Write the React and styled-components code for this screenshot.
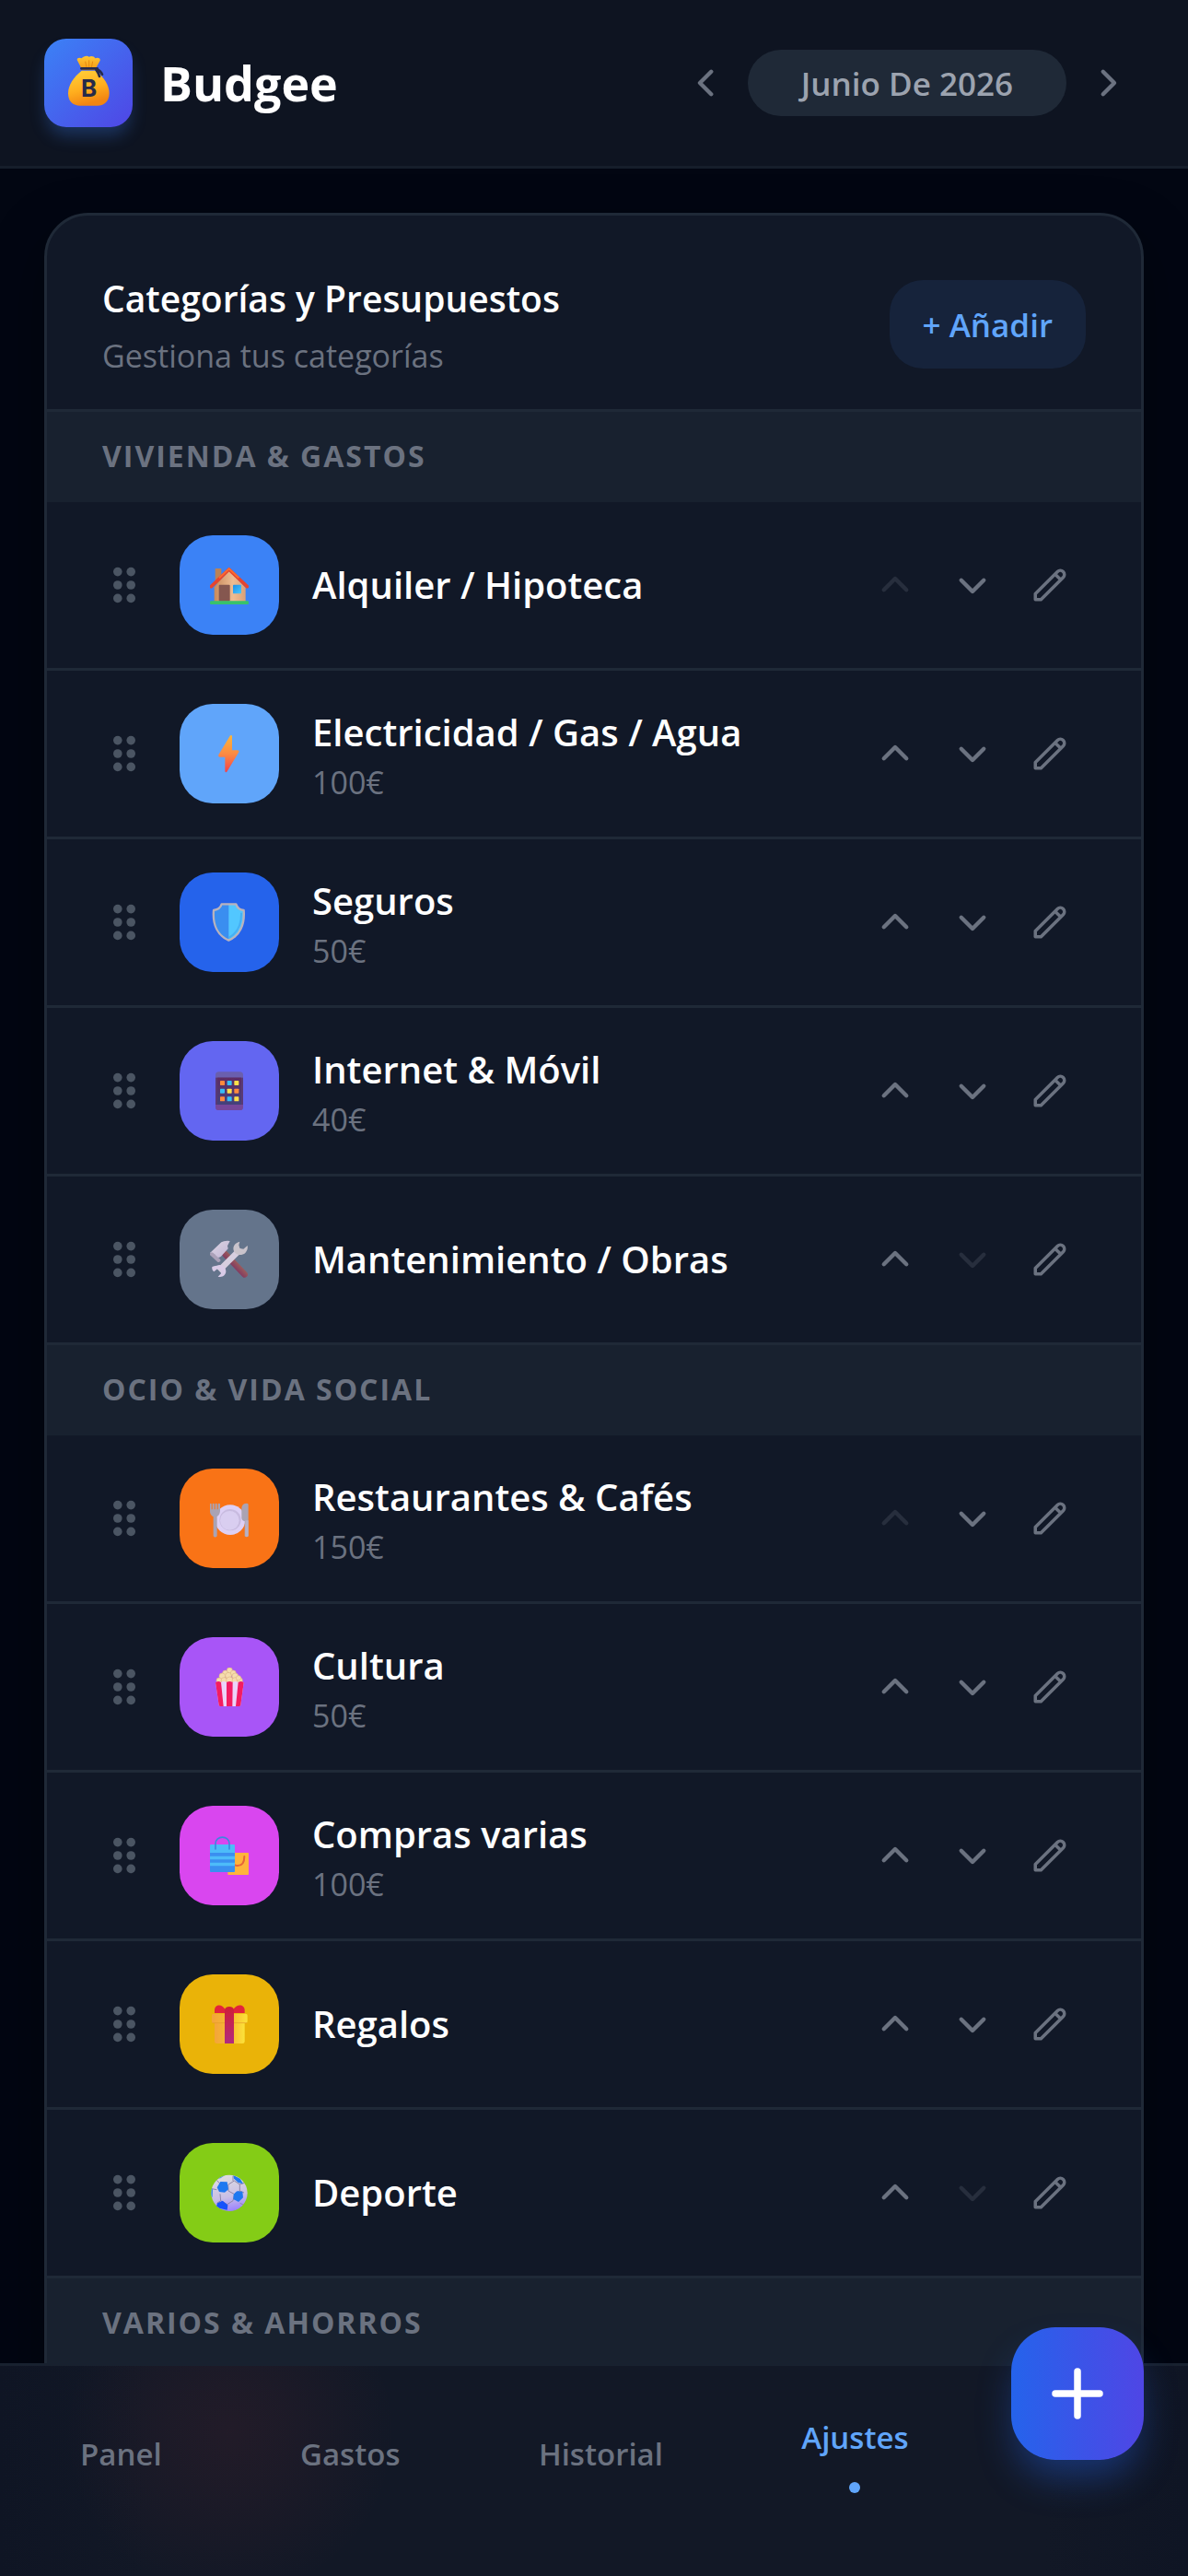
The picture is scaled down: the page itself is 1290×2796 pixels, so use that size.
import styled, { createGlobalStyle } from "styled-components";

const GlobalStyle = createGlobalStyle`
  * {
    box-sizing: border-box;
  }

  body {
    margin: 0;
    background: #020612;
    color: #ffffff;
    font-family: "Open Sans", "Noto Sans", sans-serif;
  }

  button {
    border: 0;
    padding: 0;
    background: none;
    color: inherit;
    font: inherit;
    cursor: pointer;
  }

  h1, h2, h3, p, ul {
    margin: 0;
    padding: 0;
  }

  svg {
    display: block;
  }
`;

const Shell = styled.div`
  display: flex;
  flex-direction: column;
  height: 100vh;
`;

const Header = styled.header`
  display: flex;
  align-items: center;
  justify-content: space-between;
  padding: 42px 48px;
  background: #0e1421;
  border-bottom: 3px solid #161e2b;
`;

const Brand = styled.div`
  display: flex;
  align-items: center;
  gap: 30px;
`;

const Logo = styled.div`
  display: flex;
  align-items: center;
  justify-content: center;
  width: 96px;
  height: 96px;
  border-radius: 24px;
  background: linear-gradient(135deg, #3b82f6, #4f46e5);
  box-shadow: 0 12px 18px -3px rgba(59, 130, 246, 0.3);
`;

const BrandName = styled.h1`
  font-size: 52px;
  font-weight: 700;
  line-height: 84px;
`;

const MonthPicker = styled.div`
  display: flex;
  align-items: center;
  gap: 6px;
`;

const Month = styled.button`
  padding: 2px 58px 0;
  border-radius: 36px;
  background: #1f2937;
  color: #9ca3af;
  font-size: 35px;
  font-weight: 600;
  line-height: 70px;
`;

const IconButton = styled.button`
  display: flex;
  align-items: center;
  justify-content: center;
  width: 78px;
  height: 78px;
  color: #6b7280;

  &:disabled {
    opacity: 0.25;
    cursor: default;
  }
`;

const Main = styled.main`
  flex: 1;
  min-height: 0;
  padding: 48px 48px 0;
  overflow-y: auto;
  scrollbar-width: none;
`;

const Card = styled.section`
  min-height: 100%;
  padding-bottom: 180px;
  overflow: hidden;
  background: #111827;
  border: 3px solid #1f2937;
  border-radius: 48px;
  box-shadow: 0 24px 60px rgba(0, 0, 0, 0.35);
`;

const CardHeader = styled.div`
  display: flex;
  align-items: center;
  justify-content: space-between;
  padding: 60px 60px 34px;
  border-bottom: 3px solid #1f2937;
`;

const CardTitle = styled.h2`
  font-size: 39px;
  font-weight: 600;
  line-height: 60px;
`;

const CardSubtitle = styled.p`
  margin-top: 8px;
  color: #6b7280;
  font-size: 34px;
  line-height: 48px;
`;

const AddButton = styled.button`
  padding: 2px 36px 0;
  border-radius: 36px;
  background: #16233b;
  color: #60a5fa;
  font-size: 35px;
  font-weight: 600;
  line-height: 94px;
`;

const GroupTitle = styled.h3`
  padding: 23px 60px 25px;
  background: #18212f;
  color: #6b7280;
  font-size: 32px;
  font-weight: 700;
  letter-spacing: 2px;
  line-height: 50px;
  text-transform: uppercase;
`;

const List = styled.ul`
  list-style: none;
`;

const Row = styled.li`
  display: flex;
  align-items: center;
  gap: 36px;
  padding: 36px 60px;
  border-bottom: 3px solid #1f2937;
`;

const Grip = styled.button`
  display: flex;
  align-items: center;
  justify-content: center;
  width: 48px;
  height: 48px;
  color: #4b5563;
  cursor: grab;
`;

const Tile = styled.div`
  display: flex;
  align-items: center;
  justify-content: center;
  width: 108px;
  height: 108px;
  border-radius: 36px;
  background: ${(props) => props.$color};
`;

const RowText = styled.div`
  flex: 1;
  min-width: 0;
`;

const Name = styled.p`
  font-size: 40px;
  font-weight: 600;
  line-height: 62px;
`;

const Amount = styled.p`
  color: #6b7280;
  font-size: 34px;
  line-height: 46px;
`;

const Actions = styled.div`
  display: flex;
  gap: 6px;
`;

const Nav = styled.nav`
  display: flex;
  align-items: center;
  justify-content: space-between;
  height: 231px;
  padding: 0 48px 36px;
  border-top: 3px solid #18212f;
  background:
    radial-gradient(
      circle at 250px 72px,
      rgba(239, 68, 68, 0.07),
      rgba(239, 68, 68, 0.05) 60px,
      rgba(239, 68, 68, 0) 180px
    ),
    linear-gradient(90deg, #0f1524, #121826 12%, #121826 88%, #0f1524);
`;

const NavLink = styled.a`
  display: flex;
  flex-direction: column;
  align-items: center;
  gap: 24px;
  padding: 0 39px;
  color: ${(props) => (props.$active ? "#60a5fa" : "#6b7280")};
  font-size: 33px;
  font-weight: 600;
  line-height: 48px;
  text-decoration: none;
`;

const Dot = styled.span`
  width: 12px;
  height: 12px;
  border-radius: 50%;
  background: #60a5fa;
`;

const Fab = styled.button`
  display: flex;
  align-items: center;
  justify-content: center;
  align-self: flex-start;
  width: 144px;
  height: 144px;
  margin-top: -42px;
  border-radius: 48px;
  background: linear-gradient(90deg, #2563eb, #4f46e5);
  box-shadow: 0 24px 42px -6px rgba(37, 99, 235, 0.4);
`;

const paths = {
  left: "M15 19l-7-7 7-7",
  right: "M9 5l7 7-7 7",
  up: "M5 15l7-7 7 7",
  down: "M19 9l-7 7-7-7",
  edit: "M15.232 5.232l3.536 3.536m-2.036-5.036a2.5 2.5 0 113.536 3.536L6.5 21.036H3v-3.572L16.732 3.732z",
  plus: "M12 4v16m8-8H4",
};

function Icon({ name, size = 42, stroke = 2.5 }) {
  return (
    <svg
      width={size}
      height={size}
      viewBox="0 0 24 24"
      fill="none"
      stroke="currentColor"
      strokeWidth={stroke}
      strokeLinecap="round"
      strokeLinejoin="round"
      aria-hidden="true"
    >
      <path d={paths[name]} />
    </svg>
  );
}

function GripIcon() {
  return (
    <svg width="48" height="48" viewBox="0 0 20 20" fill="currentColor" aria-hidden="true">
      {[7, 13].map((x) =>
        [4, 10, 16].map((y) => <circle key={`${x}-${y}`} cx={x} cy={y} r="2" />)
      )}
    </svg>
  );
}

function MoneyBag() {
  return (
    <svg width="60" height="60" viewBox="0 0 180 180" aria-hidden="true">
      <defs>
        <linearGradient id="bag" x1="0" y1="0" x2="0.3" y2="1">
          <stop offset="0" stopColor="#ffd23c" />
          <stop offset="0.6" stopColor="#ffae1e" />
          <stop offset="1" stopColor="#f28512" />
        </linearGradient>
        <linearGradient id="bagTop" x1="0" y1="0" x2="0" y2="1">
          <stop offset="0" stopColor="#ffc634" />
          <stop offset="1" stopColor="#f59a12" />
        </linearGradient>
      </defs>
      <path
        d="M70 48L53 15c0-7 8-9 15-5 6-7 18-10 24-5 8-4 17-1 20 5 9-4 18 0 16 7l-17 31z"
        fill="url(#bagTop)"
      />
      <path d="M80 20l4 20M92 16v24M104 20l-4 20" stroke="#e58a10" strokeWidth="3" />
      <path
        d="M68 50h46c26 20 44 48 44 73 0 30-20 41-38 41H62c-20 0-38-11-38-40 0-27 18-53 44-74z"
        fill="url(#bag)"
      />
      <path
        d="M67 43h52M117 45c8 4 14 8 18 17M115 47c6 8 9 14 11 22"
        fill="none"
        stroke="#252a4a"
        strokeWidth="8"
        strokeLinecap="round"
      />
      <text x="92" y="134" fill="#252a4a" fontFamily="Inter, sans-serif" fontSize="78" fontWeight="700" textAnchor="middle">
        B
      </text>
    </svg>
  );
}

function House() {
  return (
    <>
      <defs>
        <linearGradient id="wall" x1="0" x2="1">
          <stop offset="0" stopColor="#c98a5c" />
          <stop offset="0.6" stopColor="#eebc92" />
          <stop offset="1" stopColor="#dba179" />
        </linearGradient>
        <linearGradient id="glass" x1="0" y1="0" x2="1" y2="1">
          <stop offset="0" stopColor="#1b8fe8" />
          <stop offset="1" stopColor="#4cc8ff" />
        </linearGradient>
      </defs>
      <path d="M17 9h20v50H17z" fill="#b98258" />
      <path d="M62 16l54 56v46H14V70z" fill="url(#wall)" />
      <rect x="29" y="62" width="36" height="54" rx="3" fill="#85574f" />
      <rect x="75" y="62" width="27" height="29" rx="2" fill="url(#glass)" />
      <path
        d="M4 68L62 12l59 56"
        fill="none"
        stroke="#e6442e"
        strokeWidth="11"
        strokeLinecap="round"
        strokeLinejoin="round"
      />
      <path d="M30 40L62 10l32 30" fill="none" stroke="#f96a32" strokeWidth="6" />
      <rect y="115" width="126" height="11" rx="4" fill="#38c26b" />
    </>
  );
}

function Bolt() {
  return (
    <>
      <defs>
        <linearGradient id="bolt" x1="0" y1="0" x2="0" y2="1">
          <stop offset="0" stopColor="#fbb53c" />
          <stop offset="0.5" stopColor="#fb8b43" />
          <stop offset="1" stopColor="#f2414a" />
        </linearGradient>
      </defs>
      <path
        d="M66 4q5-3 6 2v46h18q6 1 4 6L56 121q-4 6-7 0V74H32q-6-1-4-7z"
        fill="url(#bolt)"
      />
    </>
  );
}

function Shield() {
  const outline = "M38 4h47c4 12 13 19 25 20 4 48-14 83-49 98C26 107 8 72 12 24c14-2 23-8 26-20z";
  return (
    <>
      <path d={outline} fill="#3a8ef0" />
      <path d="M61 4h24c4 12 13 19 25 20 4 48-14 83-49 98z" fill="#52c7ff" />
      <path d="M102 32c1 40-12 66-41 82" fill="none" stroke="#46b0f4" strokeWidth="6" />
      <path d={outline} fill="none" stroke="#b9b3bd" strokeWidth="7" strokeLinejoin="round" />
    </>
  );
}

function Phone() {
  const colors = [
    "#ff8a3d", "#35bdf8", "#ffe04a",
    "#35bdf8", "#ffe04a", "#ff8a3d",
    "#ff8a3d", "#35bdf8", "#ffe04a",
  ];
  return (
    <>
      <defs>
        <linearGradient id="screen" x1="0" y1="0" x2="0" y2="1">
          <stop offset="0" stopColor="#5f2c62" />
          <stop offset="1" stopColor="#43417c" />
        </linearGradient>
      </defs>
      <rect x="18" y="1" width="90" height="125" rx="11" fill="#6a5fae" />
      <path d="M18 108h90v8q0 10-10 10H28q-10 0-10-10z" fill="#75479a" />
      <path d="M18 20h90v88H18z" fill="#5a3a75" />
      <path d="M24 20h78v88H24z" fill="url(#screen)" />
      {colors.map((color, i) => (
        <rect
          key={i}
          x={33 + (i % 3) * 23}
          y={30 + Math.floor(i / 3) * 26}
          width="15"
          height="15"
          rx="2"
          fill={color}
        />
      ))}
    </>
  );
}

function Tools() {
  return (
    <>
      <defs>
        <linearGradient id="handle" x1="0" y1="1" x2="1" y2="0">
          <stop offset="0.3" stopColor="#7a2e62" />
          <stop offset="0.7" stopColor="#a3675a" />
        </linearGradient>
        <linearGradient id="steel" x1="0" y1="0" x2="1" y2="1">
          <stop offset="0" stopColor="#ddd6e2" />
          <stop offset="1" stopColor="#c2b5d6" />
        </linearGradient>
      </defs>
      <path d="M50 46l63 66" stroke="url(#handle)" strokeWidth="20" strokeLinecap="round" />
      <path d="M0 42L37 7q10-6 28-4l-8 16 2 9-23 25q-8 6-16 3l-4-9z" fill="url(#steel)" />
      <path d="M6 46l22 20" stroke="#aaa0b8" strokeWidth="12" strokeLinecap="round" />
      <path d="M29 100L100 29" stroke="#d6cedf" strokeWidth="19" />
      <path d="M97 5c-16 3-25 17-19 31 6 14 25 16 37 6 6-6 9-15 7-24l-13 11-12-2-3-11z" fill="#c9c3cb" />
      <path d="M7 87c-2 8 3 14 6 16l11-9 11 3 1 12-10 10c14 4 26-5 26-17 0-15-14-25-30-19-6 1-11 2-15 4z" fill="#d9cbe7" />
    </>
  );
}

function Plate() {
  return (
    <>
      <circle cx="66" cy="68" r="49" fill="#ddd0f5" />
      <circle cx="66" cy="68" r="35" fill="#c8bbdf" />
      <circle cx="64" cy="70" r="31" fill="#d9cef0" />
      <path
        d="M0 16q3-4 5 0v18h3V16q3-4 6 0v18h3V16q3-4 6 0v18h3V16q4-4 7 0v24q-1 12-10 17v64q-6 7-12 0V58Q0 52 0 40z"
        fill="#aaa3b4"
      />
      <path d="M103 30q1-16 18-16 4 0 4 5v102q-6 6-12 0V72q-9-1-10-10z" fill="#aaa3b4" />
      <path d="M115 70h10v51q-5 5-10 0z" fill="#b9b1c4" />
    </>
  );
}

function Popcorn() {
  const kernels = [
    [64, 9, 9], [50, 18, 9], [76, 18, 9], [40, 28, 10], [60, 26, 10], [82, 28, 10],
    [30, 42, 9], [46, 42, 10], [64, 41, 11], [82, 42, 10], [97, 42, 9], [93, 34, 8],
  ];
  return (
    <>
      {kernels.map(([x, y, r]) => (
        <circle key={`${x}-${y}`} cx={x} cy={y} r={r} fill="#f5dcae" stroke="#dfb784" strokeWidth="2" />
      ))}
      <path
        d="M18 49q9-8 18-1 9-6 18 0 10-6 20 0 9-6 18 0 9-7 18 1l-10 73q-1 4-5 4H34q-4 0-5-4z"
        fill="#ecd3fa"
      />
      <path
        d="M18 49q9-8 18-1l8 78H34q-4 0-5-4zM54 48q10-6 20 0l-1 78H54zM92 48q9-7 18 1l-10 73q-1 4-5 4H84z"
        fill="#f31c62"
      />
    </>
  );
}

function Bags() {
  return (
    <>
      <rect x="58" y="54" width="68" height="72" rx="2" fill="#ffb43c" />
      <path
        d="M112 66c0 20-8 30-22 30-8 0-12-3-17-8"
        fill="none"
        stroke="#e8643a"
        strokeWidth="6"
        strokeLinecap="round"
      />
      <rect y="27" width="81" height="90" rx="3" fill="#4dbcf9" />
      <path d="M0 54h81v11H0zM0 76h81v10H0zM0 97h81v17q-1 3-4 3H4q-4 0-4-3z" fill="#3a8ff0" />
      <path
        d="M18 42V25C18-4 63-4 63 25v17"
        fill="none"
        stroke="#3d86e0"
        strokeWidth="5"
        strokeLinecap="round"
      />
    </>
  );
}

function Gift() {
  return (
    <>
      <defs>
        <linearGradient id="box" x1="0" x2="1">
          <stop offset="0" stopColor="#f3a43a" />
          <stop offset="0.6" stopColor="#f8bf30" />
          <stop offset="1" stopColor="#fce23a" />
        </linearGradient>
        <linearGradient id="ribbon" x1="0" y1="0" x2="0" y2="1">
          <stop offset="0" stopColor="#d01f35" />
          <stop offset="1" stopColor="#b02a80" />
        </linearGradient>
      </defs>
      <path d="M15 27V16C16-2 38-4 48 13l15 14zM113 27V16C112-2 88-4 78 13L63 27z" fill="#e3243b" />
      <path d="M15 56h98v63q0 7-7 7H22q-7 0-7-7z" fill="url(#box)" />
      <rect x="6" y="29" width="116" height="31" rx="6" fill="url(#box)" />
      <path d="M8 59h112" stroke="#e39b28" strokeWidth="2" />
      <path d="M48 126V16q3-10 15-10t15 10v110z" fill="url(#ribbon)" />
    </>
  );
}

function Ball() {
  return (
    <>
      <defs>
        <linearGradient id="ball" x1="0.4" y1="0" x2="0.6" y2="1">
          <stop offset="0" stopColor="#dedce0" />
          <stop offset="0.6" stopColor="#c9bfe6" />
          <stop offset="1" stopColor="#9a80ff" />
        </linearGradient>
        <clipPath id="ballClip">
          <circle cx="63" cy="64" r="59" />
        </clipPath>
      </defs>
      <circle cx="63" cy="64" r="59" fill="url(#ball)" />
      <g clipPath="url(#ballClip)">
        <path
          d="M59 37l20-13 18 12v21L80 68 60 57zM80 68l-5 21-19 12-21-12-2-22M32 33L22 22M75 24V8M97 36l18-6M97 57l14 6M56 101v12M35 89l-12 8M22 53L5 50M98 97l12 6"
          fill="none"
          stroke="#8f86a8"
          strokeWidth="3"
        />
        <path
          d="M34 27l22 1 4 24-12 10-18-2-7-14zM88 58l18 1 2 20-15 14-17-9 1-16zM76 6l22 11 10 17-16-4-14-13z"
          fill="#1f78f0"
        />
        <path d="M24 97l17-8 17 14-2 16-36-8z" fill="#1752fb" />
        <path d="M20 18L44 4h8L34 16zM4 45l5 8-1 26-6-9z" fill="#3989ea" />
      </g>
    </>
  );
}

const groups = [
  {
    title: "Vivienda & Gastos",
    items: [
      { name: "Alquiler / Hipoteca", color: "#3b82f6", art: House },
      { name: "Electricidad / Gas / Agua", amount: "100€", color: "#60a5fa", art: Bolt },
      { name: "Seguros", amount: "50€", color: "#2563eb", art: Shield },
      { name: "Internet & Móvil", amount: "40€", color: "#6366f1", art: Phone },
      { name: "Mantenimiento / Obras", color: "#64748b", art: Tools },
    ],
  },
  {
    title: "Ocio & Vida Social",
    items: [
      { name: "Restaurantes & Cafés", amount: "150€", color: "#f97316", art: Plate },
      { name: "Cultura", amount: "50€", color: "#a855f7", art: Popcorn },
      { name: "Compras varias", amount: "100€", color: "#d946ef", art: Bags },
      { name: "Regalos", color: "#eab308", art: Gift },
      { name: "Deporte", color: "#84cc16", art: Ball },
    ],
  },
  { title: "Varios & Ahorros", items: [] },
];

const links = ["Panel", "Gastos", "Historial", "Ajustes"];

function Category({ name, amount, color, art: Art, first, last }) {
  return (
    <Row>
      <Grip aria-label={`Mover ${name}`}>
        <GripIcon />
      </Grip>
      <Tile $color={color}>
        <svg width="42" height="42" viewBox="0 0 126 126" aria-hidden="true">
          <Art />
        </svg>
      </Tile>
      <RowText>
        <Name>{name}</Name>
        {amount && <Amount>{amount}</Amount>}
      </RowText>
      <Actions>
        <IconButton aria-label="Subir" disabled={first}>
          <Icon name="up" />
        </IconButton>
        <IconButton aria-label="Bajar" disabled={last}>
          <Icon name="down" />
        </IconButton>
        <IconButton aria-label="Editar">
          <Icon name="edit" stroke={2} />
        </IconButton>
      </Actions>
    </Row>
  );
}

export default function App() {
  return (
    <Shell>
      <GlobalStyle />
      <Header>
        <Brand>
          <Logo>
            <MoneyBag />
          </Logo>
          <BrandName>Budgee</BrandName>
        </Brand>
        <MonthPicker>
          <IconButton aria-label="Mes anterior">
            <Icon name="left" />
          </IconButton>
          <Month>Junio De 2026</Month>
          <IconButton aria-label="Mes siguiente">
            <Icon name="right" />
          </IconButton>
        </MonthPicker>
      </Header>

      <Main>
        <Card>
          <CardHeader>
            <div>
              <CardTitle>Categorías y Presupuestos</CardTitle>
              <CardSubtitle>Gestiona tus categorías</CardSubtitle>
            </div>
            <AddButton>+ Añadir</AddButton>
          </CardHeader>
          {groups.map((group) => (
            <div key={group.title}>
              <GroupTitle>{group.title}</GroupTitle>
              <List>
                {group.items.map((item, i) => (
                  <Category
                    key={item.name}
                    {...item}
                    first={i === 0}
                    last={i === group.items.length - 1}
                  />
                ))}
              </List>
            </div>
          ))}
        </Card>
      </Main>

      <Nav>
        {links.map((link) => (
          <NavLink key={link} href={`#${link.toLowerCase()}`} $active={link === "Ajustes"}>
            {link}
            {link === "Ajustes" && <Dot />}
          </NavLink>
        ))}
        <Fab aria-label="Añadir gasto">
          <Icon name="plus" size={72} />
        </Fab>
      </Nav>
    </Shell>
  );
}
